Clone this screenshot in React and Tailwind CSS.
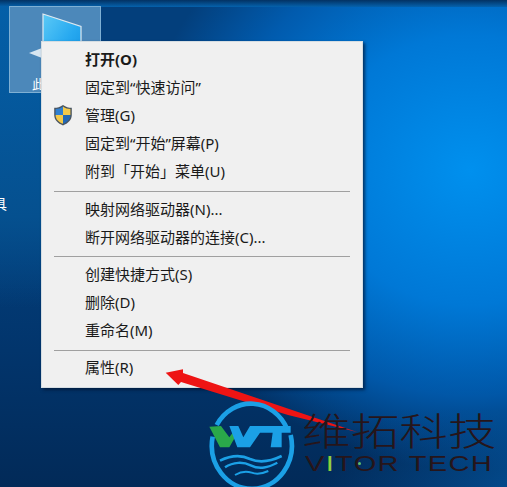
import React from "react";

const font = { fontFamily: '"Noto Sans","Noto Sans CJK SC",sans-serif' };

function Shield() {
  return (
    <svg width="22" height="22" viewBox="0 0 22 22">
      <path d="M11 1 C8 3.2 5.5 3.8 2.2 3.8 L2.2 11 C2.2 16 6 19.4 11 21.4 C16 19.4 19.8 16 19.8 11 L19.8 3.8 C16.5 3.8 14 3.2 11 1Z" fill="#4a5560" />
      <path d="M11 2.6 C8.5 4.4 6.3 5 3.6 5.1 L3.6 11 L11 11Z" fill="#2f7fd0" />
      <path d="M11 2.6 C13.5 4.4 15.7 5 18.4 5.1 L18.4 11 L11 11Z" fill="#f3c94a" />
      <path d="M3.6 11 L11 11 L11 19.8 C7 18.2 3.6 15.6 3.6 11Z" fill="#f3c94a" />
      <path d="M18.4 11 L11 11 L11 19.8 C15 18.2 18.4 15.6 18.4 11Z" fill="#2368b5" />
    </svg>
  );
}

function Item({ children, bold, icon }) {
  return (
    <div className={`h-[28.2px] shrink-0 flex items-center pl-[43px] relative text-[15px] leading-none text-[#1a1a1a] ${bold ? "font-bold" : ""}`}>
      {icon && <span className="absolute left-[10px] top-[3px]">{icon}</span>}
      {children}
    </div>
  );
}

function Sep() {
  return <div className="h-px shrink-0 bg-[#a0a0a0] mx-[12px] mt-[5px] mb-[3px]" />;
}

export default function App() {
  return (
    <div className="relative w-[507px] h-[487px] overflow-hidden bg-[#033f7c]" style={font}>
      <div className="absolute inset-0 bg-[linear-gradient(180deg,rgba(0,120,215,0)_0%,rgba(0,110,200,0)_45%,#02356c_72%,#022a58_100%)]" />
      <div className="absolute inset-0 bg-[radial-gradient(ellipse_330px_300px_at_470px_170px,#0090ee_0%,#0078d6_45%,rgba(0,100,190,0.75)_75%,rgba(0,80,160,0)_100%)]" />
      <div className="absolute inset-x-0 top-0 h-[7px] bg-[linear-gradient(180deg,#033263,#0562ad)]" />
      <div className="absolute left-0 top-[7px] w-[41px] h-[300px] bg-[linear-gradient(180deg,#045fa8,#05508f_70%,rgba(3,60,115,0))]" />
      <div className="absolute left-[300px] top-[410px] w-[207px] h-[77px] bg-[linear-gradient(135deg,rgba(2,42,88,0)_30%,rgba(3,80,150,0.8)_100%)]" />

      {/* selected desktop icon */}
      <div className="absolute left-[9px] top-[6px] w-[92px] h-[87px] bg-[#4c88ba] border border-[#7fb0d4]">
        <svg className="absolute left-[18px] top-[6px]" width="60" height="56" viewBox="0 0 60 56">
          <defs>
            <linearGradient id="scr" x1="0" y1="0" x2="1" y2="1">
              <stop offset="0" stopColor="#5ccaf6" />
              <stop offset="0.55" stopColor="#27a9f0" />
              <stop offset="1" stopColor="#0e8fe2" />
            </linearGradient>
          </defs>
          <path d="M15 1 L53 13.5 L53 56 L15 56Z" fill="url(#scr)" stroke="#dfe9f0" strokeWidth="1.2" />
          <path d="M1 40 L14 35 L14 45Z" fill="#d7e6f1" />
        </svg>
        <span className="absolute left-[22px] top-[71px] text-[13px] leading-none text-white">此</span>
      </div>
      <span className="absolute left-[-7px] top-[197px] text-[14px] leading-none text-white">具</span>

      {/* context menu */}
      <div className="absolute left-[41px] top-[41px] w-[322px] h-[347px] flex flex-col bg-[#f0f0f0] border border-[#d5dde2] pt-[3px] shadow-[2px_2px_3px_rgba(0,20,50,0.7)]">
        <Item bold>打开(O)</Item>
        <Item>固定到“快速访问”</Item>
        <Item icon={<Shield />}>管理(G)</Item>
        <Item>固定到“开始”屏幕(P)</Item>
        <Item>附到「开始」菜单(U)</Item>
        <Sep />
        <Item>映射网络驱动器(N)...</Item>
        <Item>断开网络驱动器的连接(C)...</Item>
        <Sep />
        <Item>创建快捷方式(S)</Item>
        <Item>删除(D)</Item>
        <Item>重命名(M)</Item>
        <Sep />
        <Item>属性(R)</Item>
      </div>

      {/* arrow */}
      <svg className="absolute left-[160px] top-[365px]" width="200" height="70" viewBox="0 0 200 70">
        <path d="M5.7 7.7 L23 4.3 L23 8 L197 67 L128 50 L21 17 L18.3 20Z" fill="#ee1414" />
      </svg>

      {/* logo */}
      <svg className="absolute left-[200px] top-[390px]" width="100" height="97" viewBox="0 0 300 291">
        <path d="M50 105 A120 132 0 0 1 262 118" fill="none" stroke="#1ba0e6" strokeWidth="14" />
        <path d="M38 140 A120 130 0 1 0 272 135" fill="none" stroke="#1ba0e6" strokeWidth="14" />
        <path d="M28 110 L63 108 L88 142 L98 128 L106 140 L88 172 L60 172Z" fill="#2aa84a" />
        <path d="M88 108 L115 108 L130 142 L150 108 L272 108 L272 128 L245 128 L245 172 L212 172 L218 128 L180 128 L150 172 L112 172Z" fill="#1ba0e6" />
        <path d="M60 212 C95 195 125 195 150 207 C180 220 210 215 245 198" fill="none" stroke="#1ba0e6" strokeWidth="8" />
        <path d="M75 232 C100 215 130 215 152 226 C180 240 205 232 232 218" fill="none" stroke="#1ba0e6" strokeWidth="7" />
        <path d="M105 255 C125 243 140 243 155 248 C170 254 185 252 205 243" fill="none" stroke="#1ba0e6" strokeWidth="6" />
      </svg>

      {/* logo text */}
      <div className="absolute left-[302px] top-[411px] origin-left scale-x-[1.28] text-[#26151a] text-[38px] leading-none font-light whitespace-nowrap">
        维拓科技
      </div>
      <div
        className="absolute left-[305px] top-[453px] origin-left scale-x-[1.32] text-[#26151a] text-[22px] leading-none tracking-[1px] whitespace-nowrap"
        style={{ fontFamily: '"Liberation Sans",sans-serif' }}
      >
        V<span className="text-[#8fce3f]">I</span>TOR TECH
      </div>
      <div className="absolute left-[358px] top-[462px] size-[3px] rounded-full bg-[#5fc06a]" />
    </div>
  );
}
